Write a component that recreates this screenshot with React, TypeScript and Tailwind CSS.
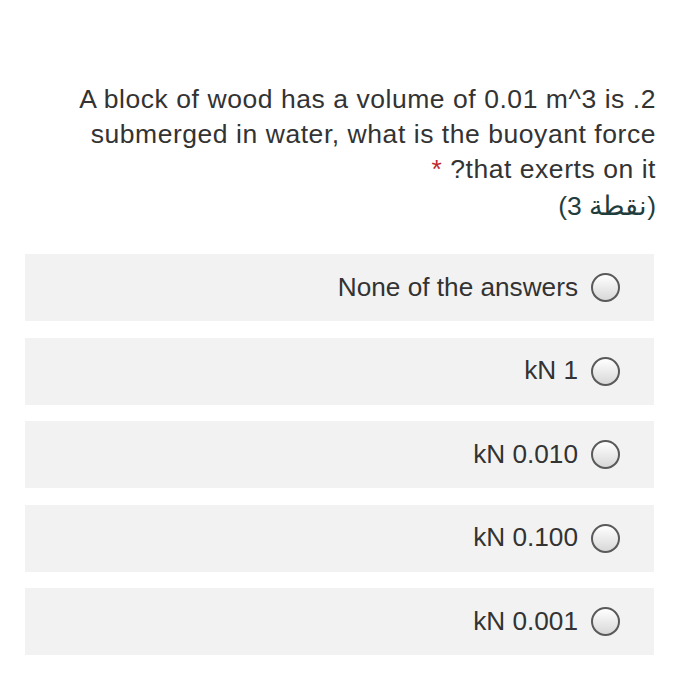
import React from 'react';

const options = ['None of the answers', 'kN 1', 'kN 0.010', 'kN 0.100', 'kN 0.001'];

const Radio: React.FC = () => (
  <span className="inline-block h-[29px] w-[29px] shrink-0 rounded-full border-2 border-[#5a5a5a] bg-gradient-to-b from-white to-[#d8d8d8]" />
);

const App: React.FC = () => {
  return (
    <div className="h-[700px] w-[679px] bg-white font-['Liberation_Sans',Arial,sans-serif] text-[#333]">
      <div className="px-[25px] pt-[82px]">
        <div className="-mr-[2px] text-right text-[26.5px] leading-[35px] tracking-[0.55px]">
          <div>A block of wood has a volume of 0.01 m^3 is .2</div>
          <div>submerged in water, what is the buoyant force</div>
          <div>
            <span className="text-[#c0272d]">*</span> ?that exerts on it
          </div>
          <div className="mt-[2px] text-[#1f3d3d]">(3 نقطة)</div>
        </div>

        <div className="mt-[30px] flex flex-col gap-[16.5px]">
          {options.map((opt) => (
            <div
              key={opt}
              className="flex h-[67px] items-center justify-end gap-[13px] bg-[#f2f2f2] pr-[34px] text-[26.2px]"
            >
              <span>{opt}</span>
              <Radio />
            </div>
          ))}
        </div>
      </div>
    </div>
  );
};

export default App;
